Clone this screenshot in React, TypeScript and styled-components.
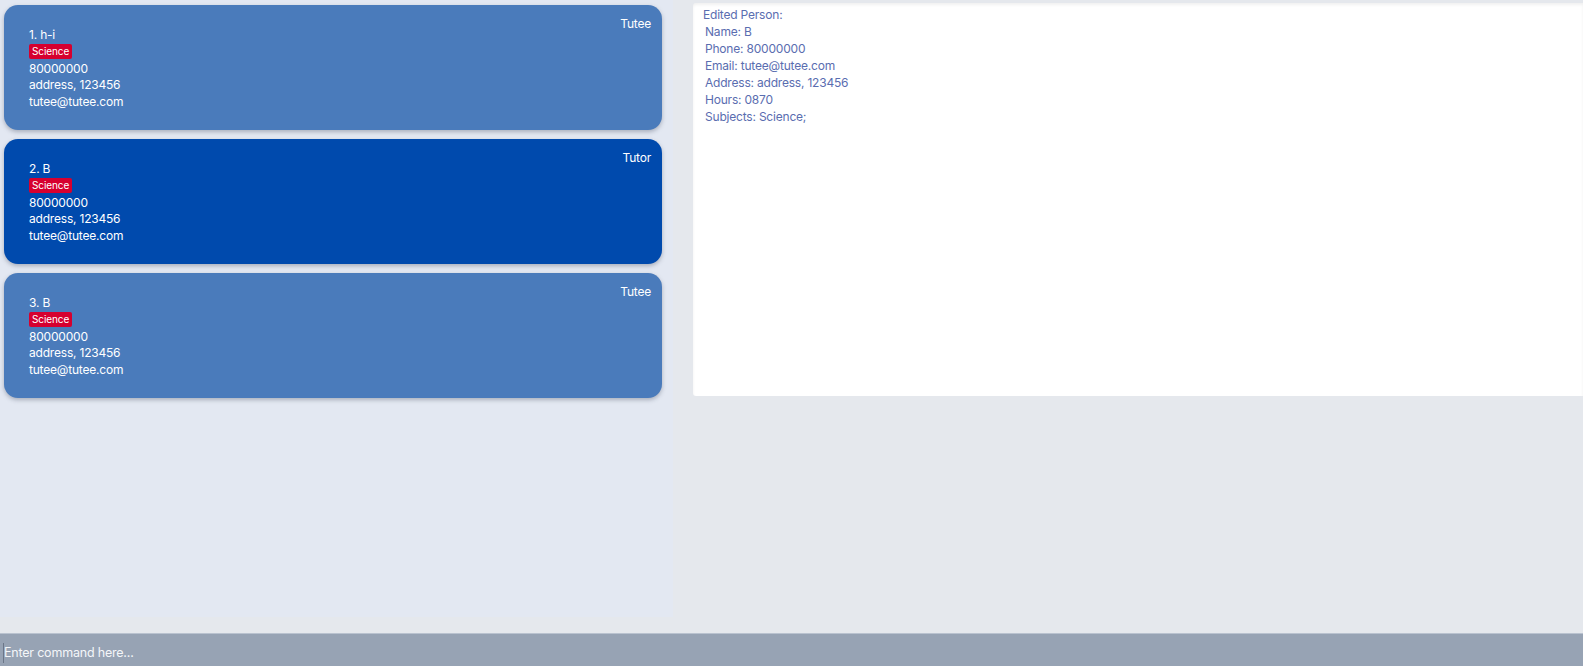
import React from "react";
import styled, { createGlobalStyle } from "styled-components";

const Global = createGlobalStyle`
  html, body { margin: 0; padding: 0; }
  body {
    background: #e5e8ed;
    font-family: Inter, "Noto Sans", sans-serif;
    overflow: hidden;
  }
`;

const Page = styled.div`
  width: 1583px;
  height: 666px;
  display: flex;
  flex-direction: column;
  background: #e5e8ed;
`;

const Main = styled.div`
  flex: 1;
  display: flex;
  min-height: 0;
  padding-bottom: 16px;
`;

const ListPanel = styled.div`
  width: 673px;
  flex-shrink: 0;
  background: #e3e8f2;
  display: flex;
  flex-direction: column;
  gap: 9px;
  padding: 5px 11px 0 4px;
  box-sizing: border-box;
`;

const Card = styled.div<{ $selected?: boolean }>`
  height: 125px;
  box-sizing: border-box;
  border-radius: 14px;
  background: ${(p) => (p.$selected ? "#004aad" : "#4a7bbb")};
  box-shadow: 0 2px 4px rgba(60, 70, 90, 0.35);
  color: #ffffff;
  display: flex;
  justify-content: space-between;
  align-items: flex-start;
  padding: 11px 11px 0 25px;
  font-size: 12px;
  letter-spacing: -0.2px;
`;

const Details = styled.div`
  display: flex;
  flex-direction: column;
  margin-top: 11px;
`;

const Line = styled.div`
  line-height: 16.7px;
  white-space: nowrap;
`;

const Tag = styled.span`
  align-self: flex-start;
  background: #d6002f;
  color: #fff;
  font-size: 10px;
  letter-spacing: -0.1px;
  line-height: 15px;
  height: 15px;
  padding: 0 3px;
  border-radius: 2px;
  margin: 0 0 2px;
`;

const Role = styled.div`
  line-height: 16px;
`;

const ResultArea = styled.div`
  flex: 1;
  padding: 3px 0 0 20px;
  display: flex;
  flex-direction: column;
`;

const ResultBox = styled.div`
  height: 393px;
  background: #ffffff;
  border-radius: 3px 0 0 3px;
  box-shadow: inset 0 2px 3px rgba(0, 0, 0, 0.06);
  padding: 3px 0 0 10px;
  box-sizing: border-box;
  color: #5a6db0;
  font-size: 12px;
  letter-spacing: -0.2px;
`;

const ResultLine = styled.div<{ $indent?: boolean }>`
  line-height: 17px;
  padding-left: ${(p) => (p.$indent ? "2px" : "0")};
  white-space: pre;
`;

const CommandBar = styled.div`
  height: 33px;
  flex-shrink: 0;
  background: #97a3b4;
  border-top: 1px solid #b9c2cf;
  box-sizing: border-box;
  display: flex;
  align-items: center;
  padding: 5px 0 0 3px;
`;

const CommandInput = styled.input`
  flex: 1;
  background: transparent;
  border: none;
  outline: none;
  font-family: Inter, "Noto Sans", sans-serif;
  font-size: 12.5px;
  letter-spacing: -0.2px;
  color: #ffffff;
  padding: 0;
  border-left: 1px solid #6b7688;
  height: 20px;
  &::placeholder {
    color: #f4f6f9;
  }
`;

type Person = { idx: number; name: string; role: string; selected?: boolean };

const people: Person[] = [
  { idx: 1, name: "h-i", role: "Tutee" },
  { idx: 2, name: "B", role: "Tutor", selected: true },
  { idx: 3, name: "B", role: "Tutee" },
];

export default function App() {
  return (
    <Page>
      <Global />
      <Main>
        <ListPanel>
          {people.map((p) => (
            <Card key={p.idx} $selected={p.selected}>
              <Details>
                <Line>
                  {p.idx}. {p.name}
                </Line>
                <Tag>Science</Tag>
                <Line>80000000</Line>
                <Line>address, 123456</Line>
                <Line>tutee@tutee.com</Line>
              </Details>
              <Role>{p.role}</Role>
            </Card>
          ))}
        </ListPanel>
        <ResultArea>
          <ResultBox>
            <ResultLine>Edited Person:</ResultLine>
            <ResultLine $indent>Name: B</ResultLine>
            <ResultLine $indent>Phone: 80000000</ResultLine>
            <ResultLine $indent>Email: tutee@tutee.com</ResultLine>
            <ResultLine $indent>Address: address, 123456</ResultLine>
            <ResultLine $indent>Hours: 0870</ResultLine>
            <ResultLine $indent>Subjects: Science;</ResultLine>
          </ResultBox>
        </ResultArea>
      </Main>
      <CommandBar>
        <CommandInput placeholder="Enter command here..." />
      </CommandBar>
    </Page>
  );
}
